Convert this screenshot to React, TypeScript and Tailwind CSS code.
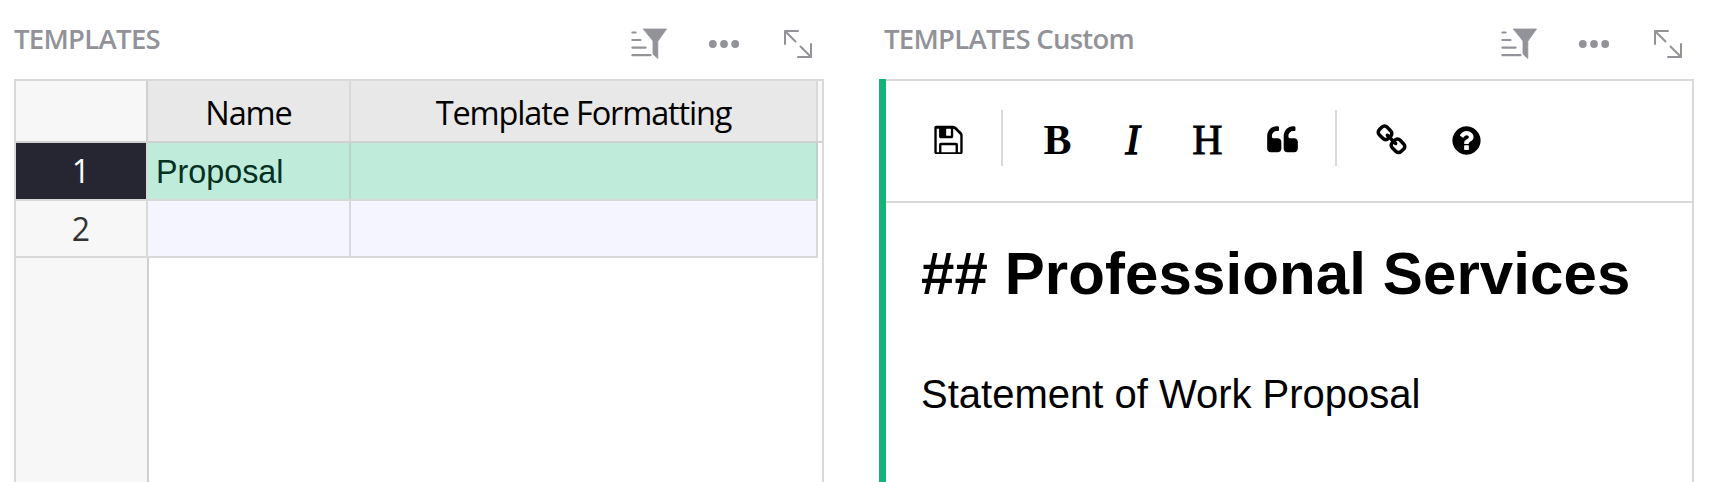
import type { ReactNode } from "react";

const FLOPPY =
  "M512 1536h768v-384h-768v384zm896 0h128v-896q0-14-10-38.5t-20-34.5l-281-281q-10-10-34-20t-39-10v416q0 40-28 68t-68 28h-576q-40 0-68-28t-28-68v-416h-128v1280h128v-416q0-40 28-68t68-28h832q40 0 68 28t28 68v416zm-384-928v-320q0-13-9.5-22.5t-22.5-9.5h-192q-13 0-22.5 9.5t-9.5 22.5v320q0 13 9.5 22.5t22.5 9.5h192q13 0 22.5-9.5t9.5-22.5zm640 32v896q0 40-28 68t-68 28h-1344q-40 0-68-28t-28-68v-1344q0-40 28-68t68-28h928q40 0 88 20t76 48l280 280q28 28 48 76t20 88z";
const QUOTE =
  "M832 960v384q0 80-56 136t-136 56h-384q-80 0-136-56t-56-136v-704q0-104 40.5-198.5t109.5-163.5 163.5-109.5 198.5-40.5h64q26 0 45 19t19 45v128q0 26-19 45t-45 19h-64q-106 0-181 75t-75 181v32q0 40 28 68t68 28h224q80 0 136 56t56 136zm896 0v384q0 80-56 136t-136 56h-384q-80 0-136-56t-56-136v-704q0-104 40.5-198.5t109.5-163.5 163.5-109.5 198.5-40.5h64q26 0 45 19t19 45v128q0 26-19 45t-45 19h-64q-106 0-181 75t-75 181v32q0 40 28 68t68 28h224q80 0 136 56t56 136z";
const LINK =
  "M1520 1216q0-40-28-68l-208-208q-28-28-68-28-42 0-72 32 3 3 19 18.5t21.5 21.5 15 19 13 25.5 3.5 27.5q0 40-28 68t-68 28q-15 0-27.5-3.5t-25.5-13-19-15-21.5-21.5-18.5-19q-33 31-33 73 0 40 28 68l206 207q27 27 68 27 40 0 68-26l147-146q28-28 28-67zm-703-705q0-40-28-68l-206-207q-28-28-68-28-39 0-68 27l-147 146q-28 28-28 67 0 40 28 68l208 208q27 27 68 27 42 0 72-31-3-3-19-18.5t-21.5-21.5-15-19-13-25.5-3.5-27.5q0-40 28-68t68-28q15 0 27.5 3.5t25.5 13 19 15 21.5 21.5 18.5 19q33-31 33-73zm895 705q0 120-85 203l-147 146q-83 83-203 83-121 0-204-85l-206-207q-83-83-83-203 0-123 88-209l-88-88q-86 88-208 88-120 0-204-84l-208-208q-84-84-84-204t85-203l147-146q83-83 203-83 121 0 204 85l206 207q83 83 83 203 0 123-88 209l88 88q86-88 208-88 120 0 204 84l208 208q84 84 84 204z";
const HELP =
  "M1024 1376v-192q0-14-9-23t-23-9h-192q-14 0-23 9t-9 23v192q0 14 9 23t23 9h192q14 0 23-9t9-23zm256-672q0-88-55.5-163t-138.5-116-170-41q-243 0-371 213-15 24 8 42l132 100q7 6 19 6 16 0 25-12 53-68 86-92 34-24 86-24 48 0 85.5 26t37.5 59q0 38-20 61t-68 45q-63 28-115.5 86.5t-52.5 125.5v36q0 14 9 23t23 9h192q14 0 23-9t9-23q0-19 21.5-49.5t54.5-49.5q32-18 49-28.5t46-35 44.5-48 28-60.5 12.5-81zm384 192q0 209-103 385.5t-279.5 279.5-385.5 103-385.5-103-279.5-279.5-103-385.5 103-385.5 279.5-279.5 385.5-103 385.5 103 279.5 279.5 103 385.5z";

function FilterIcon() {
  return (
    <svg width="38" height="34" viewBox="0 0 38 34" fill="none" stroke="#929299" strokeWidth="2.2" strokeLinecap="round">
      <path d="M2.4 5.5H5.6M2.4 13H10.4M2.4 20.6H15.6M2.4 28.2H20.4" />
      <path d="M13.5 2H36.5L27.8 14.2V31.5L23 27V14.2Z" fill="#929299" stroke="#929299" strokeWidth=".8" strokeLinejoin="round" />
    </svg>
  );
}

function DotsIcon() {
  return (
    <svg width="32" height="34" viewBox="0 0 32 34" fill="#929299">
      <circle cx="4.8" cy="17" r="3.9" />
      <circle cx="16" cy="17" r="3.9" />
      <circle cx="27.2" cy="17" r="3.9" />
    </svg>
  );
}

function ExpandIcon() {
  return (
    <svg width="30" height="34" viewBox="0 0 30 34" fill="none" stroke="#929299" strokeWidth="2" strokeLinecap="round" strokeLinejoin="round">
      <path d="M15 4H2V17M2 4L12.5 14.5M15 30H28V17M28 30L17.5 19.5" />
    </svg>
  );
}

function SectionHeader({ children }: { children: ReactNode }) {
  return (
    <header className="flex h-[79px] shrink-0 items-start pt-[27px] pr-[11px] text-[#929299]">
      <h2 className="-mt-[7px] grow font-['Open_Sans'] text-[27.5px] leading-[38px] font-semibold whitespace-nowrap">
        {children}
      </h2>
      <div className="flex">
        <FilterIcon />
        <span className="ml-10 flex"><DotsIcon /></span>
        <span className="ml-[43px] flex"><ExpandIcon /></span>
      </div>
    </header>
  );
}

function ToolButton({ label, children }: { label: string; children: ReactNode }) {
  return (
    <button aria-label={label} className="flex h-14 w-[75px] items-center justify-center pt-1 font-['Liberation_Serif'] text-[42px] leading-[56px]">
      {children}
    </button>
  );
}

function Glyph({ d }: { d: string }) {
  return (
    <svg width="33" height="33" viewBox="0 0 1792 1792" fill="#000">
      <path d={d} />
    </svg>
  );
}

function Templates() {
  return (
    <section className="flex w-[810px] flex-col">
      <SectionHeader><span className="tracking-[-0.7px]">TEMPLATES</span></SectionHeader>
      <div className="flex grow flex-col border-x-2 border-t-2 border-[#d9d9d9]">
        <div className="flex h-[62px] shrink-0 border-b-2 border-[#d0d0d0] bg-[#f7f7f7] font-['Open_Sans'] text-[32.5px] leading-[63px] text-black">
          <div className="w-[132px] border-r-2 border-[#d0d0d0]" />
          <div className="w-[203px] border-r-2 border-[#d9d9d9] bg-[#e8e8e8] text-center"><span className="tracking-[-1.1px]">Name</span></div>
          <div className="w-[467px] border-r-2 border-[#d9d9d9] bg-[#e8e8e8] text-center"><span className="tracking-[-1.15px]">Template Formatting</span></div>
        </div>
        <div className="flex h-[58px] w-[802px] shrink-0 border-b-2 border-[#d9d9d9] leading-[56px]">
          <div className="w-[132px] border-r-2 border-[#d9d9d9] bg-[#262633] text-center font-['Open_Sans'] text-[32px] text-white">1</div>
          <div className="w-[203px] border-r-2 border-[#b9d3c9] bg-[#bfebda] pl-2 font-['Liberation_Sans'] text-[32.3px] leading-[58px] text-[#06301f]">Proposal</div>
          <div className="w-[467px] border-r-2 border-[#b9d3c9] bg-[#bfebda]" />
        </div>
        <div className="flex h-[57px] w-[802px] shrink-0 border-b-2 border-[#d9d9d9] leading-[55px]">
          <div className="w-[132px] border-r-2 border-[#d9d9d9] bg-[#f7f7f7] text-center font-['Open_Sans'] text-[32px] text-[#333]">2</div>
          <div className="w-[203px] border-r-2 border-[#d9d9d9] bg-[#f5f5ff]" />
          <div className="w-[467px] border-r-2 border-[#d9d9d9] bg-[#f5f5ff]" />
        </div>
        <div className="w-[133px] grow border-r-2 border-[#d0d0d0] bg-[#f7f7f7]" />
      </div>
    </section>
  );
}

function CustomWidget() {
  return (
    <section className="flex w-[815px] flex-col">
      <div className="pl-[5px]">
        <SectionHeader><span className="tracking-[-0.72px]">TEMPLATES Custom</span></SectionHeader>
      </div>
      <div className="flex grow">
        <div className="w-[7px] bg-[#16b378]" />
        <div className="flex grow flex-col border-t-2 border-r-2 border-[#d9d9d9] font-['Liberation_Sans'] text-black">
          <div className="flex h-[120px] shrink-0 items-start pt-[29px] pl-[25px]">
            <ToolButton label="Save"><Glyph d={FLOPPY} /></ToolButton>
            <div className="mr-[17px] ml-[15px] h-14 w-[2px] bg-[#d9d9d9]" />
            <ToolButton label="Bold"><b>B</b></ToolButton>
            <ToolButton label="Italic"><i className="[-webkit-text-stroke:1.4px_black]">I</i></ToolButton>
            <ToolButton label="Heading"><span className="[-webkit-text-stroke:0.9px_black]">H</span></ToolButton>
            <ToolButton label="Quote"><Glyph d={QUOTE} /></ToolButton>
            <div className="mr-[17px] ml-[15px] h-14 w-[2px] bg-[#d9d9d9]" />
            <ToolButton label="Link"><Glyph d={LINK} /></ToolButton>
            <ToolButton label="Help"><Glyph d={HELP} /></ToolButton>
          </div>
          <div className="grow border-t-2 border-[#d9d9d9] pl-[35px] whitespace-nowrap">
            <h1 className="pt-[34px] text-[60px] leading-[74px] font-bold tracking-[0.1px]">## Professional Services</h1>
            <p className="pt-[60px] text-[40px] leading-[46px]">Statement of Work Proposal</p>
          </div>
        </div>
      </div>
    </section>
  );
}

export default function App() {
  return (
    <main className="flex h-[482px] w-[1711px] gap-[55px] overflow-hidden bg-white pl-[14px]">
      <Templates />
      <CustomWidget />
    </main>
  );
}
